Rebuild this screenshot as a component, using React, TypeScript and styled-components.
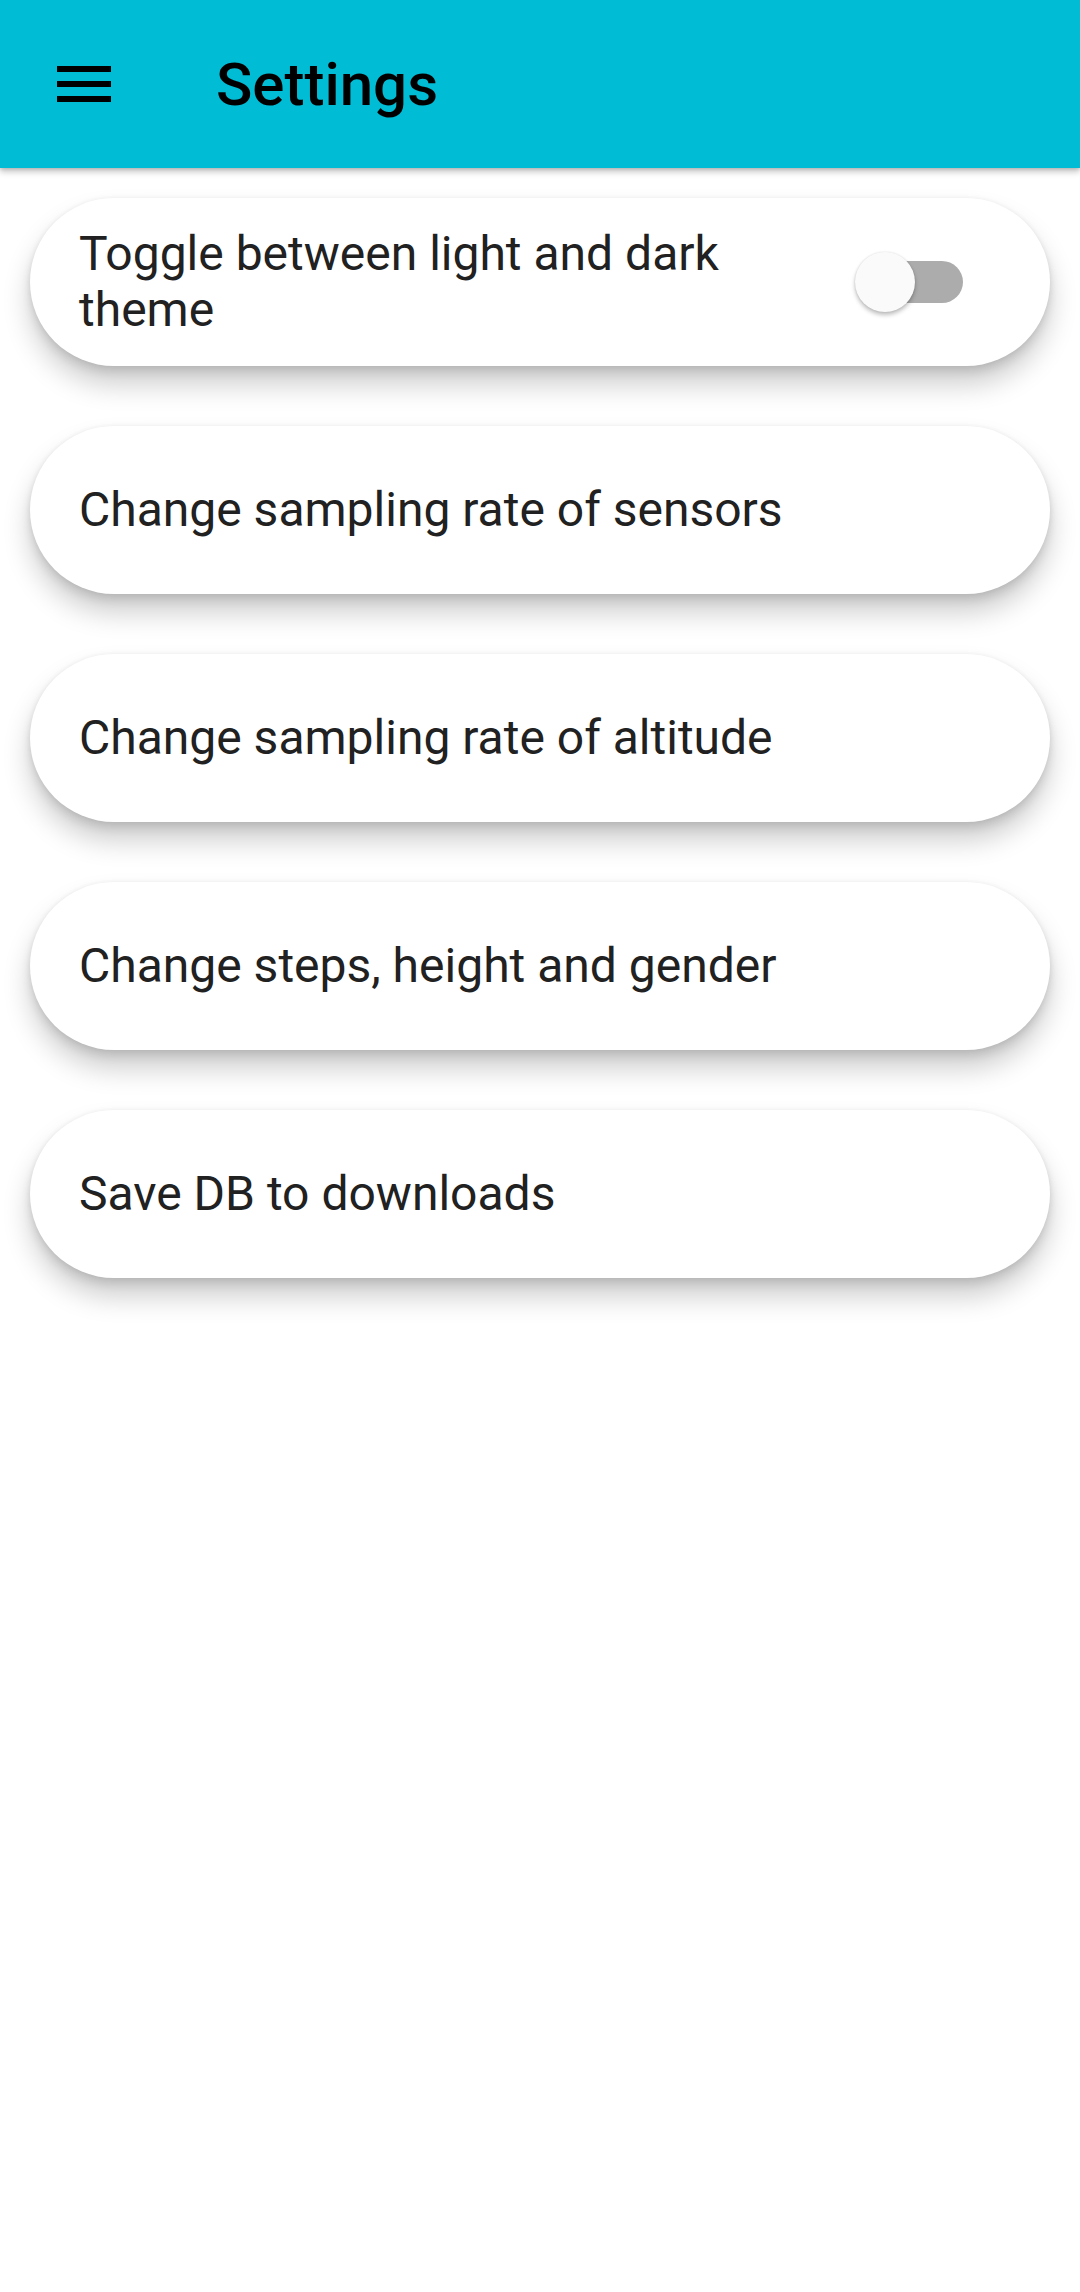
import React from "react";
import styled, { createGlobalStyle } from "styled-components";

const Global = createGlobalStyle`
  html, body { margin: 0; padding: 0; background: #ffffff; }
  body { font-family: Roboto, "Noto Sans", "Liberation Sans", sans-serif; }
  * { box-sizing: border-box; }
`;

const Page = styled.div`
  width: 1080px;
  min-height: 2292px;
  background: #ffffff;
  display: flex;
  flex-direction: column;
`;

const AppBar = styled.header`
  height: 168px;
  background: #00bcd4;
  display: flex;
  align-items: center;
  padding-left: 48px;
  gap: 96px;
  box-shadow: 0 4px 6px rgba(0, 0, 0, 0.22), 0 1px 3px rgba(0, 0, 0, 0.12);
  position: relative;
  z-index: 2;
`;

const MenuButton = styled.div`
  width: 72px;
  height: 72px;
  display: flex;
  align-items: center;
  justify-content: center;
`;

const Title = styled.h1`
  margin: 0;
  font-size: 60px;
  font-weight: 500;
  color: #000000;
`;

const List = styled.main`
  display: flex;
  flex-direction: column;
  gap: 60px;
  padding: 30px 30px;
`;

const Card = styled.div`
  height: 168px;
  background: #ffffff;
  border-radius: 84px;
  display: flex;
  align-items: center;
  justify-content: space-between;
  padding: 0 87px 0 49px;
  box-shadow: 0 18px 28px rgba(0, 0, 0, 0.2), 0 6px 10px rgba(0, 0, 0, 0.1),
    0 0 5px rgba(0, 0, 0, 0.05);
`;

const Label = styled.span<{ $narrow?: boolean }>`
  font-size: 48px;
  line-height: 56px;
  color: #212121;
  max-width: ${(p) => (p.$narrow ? "720px" : "none")};
`;

const SwitchTrack = styled.div`
  position: relative;
  width: 99px;
  height: 42px;
  border-radius: 21px;
  background: #acacac;
  flex-shrink: 0;
`;

const SwitchThumb = styled.div`
  position: absolute;
  left: -9px;
  top: -9px;
  width: 60px;
  height: 60px;
  border-radius: 50%;
  background: #fafafa;
  box-shadow: 0 3px 4px rgba(0, 0, 0, 0.25), 0 0 2px rgba(0, 0, 0, 0.12);
`;

const MenuIcon = () => (
  <svg width="72" height="72" viewBox="0 0 24 24">
    <path d="M3 18h18v-2H3v2zm0-5h18v-2H3v2zm0-7v2h18V6H3z" fill="#000" />
  </svg>
);

const items = [
  "Change sampling rate of sensors",
  "Change sampling rate of altitude",
  "Change steps, height and gender",
  "Save DB to downloads",
];

export default function App() {
  return (
    <Page>
      <Global />
      <AppBar>
        <MenuButton>
          <MenuIcon />
        </MenuButton>
        <Title>Settings</Title>
      </AppBar>
      <List>
        <Card>
          <Label $narrow>Toggle between light and dark theme</Label>
          <SwitchTrack>
            <SwitchThumb />
          </SwitchTrack>
        </Card>
        {items.map((t) => (
          <Card key={t}>
            <Label>{t}</Label>
          </Card>
        ))}
      </List>
    </Page>
  );
}
